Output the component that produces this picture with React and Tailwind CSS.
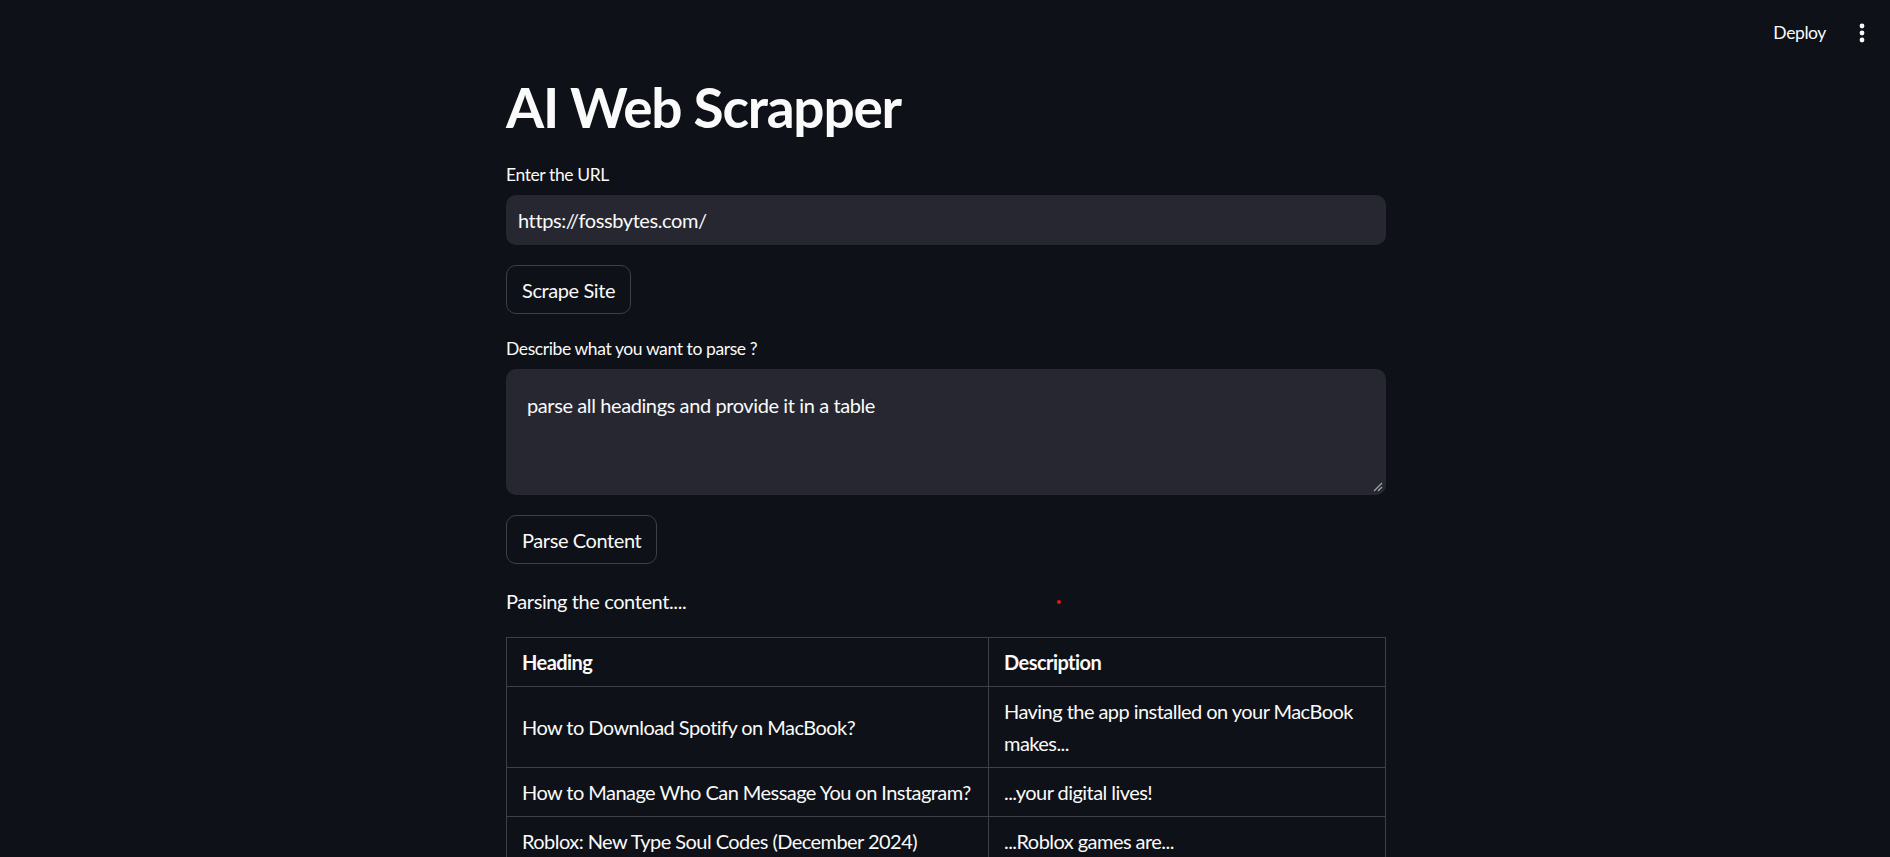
import React from "react";

const rows = [
  ["How to Download Spotify on MacBook?", "Having the app installed on your MacBook makes..."],
  ["How to Manage Who Can Message You on Instagram?", "...your digital lives!"],
  ["Roblox: New Type Soul Codes (December 2024)", "...Roblox games are..."],
];

export default function App() {
  return (
    <div
      className="relative min-h-[857px] w-full overflow-hidden bg-[#0e1117] text-[#fafafa] tracking-[-0.4px]"
      style={{ fontFamily: "Lato, 'Noto Sans', sans-serif" }}
    >
      {/* header */}
      <div className="absolute right-0 top-0 flex h-[66px] items-center pr-[25px]">
        <span className="mr-[33px] text-[17.5px] leading-none">Deploy</span>
        <svg width="6" height="20" viewBox="0 0 6 20" className="fill-[#fafafa]">
          <circle cx="3" cy="3" r="2.4" />
          <circle cx="3" cy="10" r="2.4" />
          <circle cx="3" cy="17" r="2.4" />
        </svg>
      </div>

      <div className="mx-auto flex w-[880px] flex-col gap-5 pt-[74px] translate-x-[1px]">
        <h1 className="text-[55px] font-bold leading-[66px] tracking-[-1.2px]">AI Web Scrapper</h1>

        <div className="flex flex-col">
          <label className="flex h-[30px] items-center text-[17.5px]">Enter the URL</label>
          <div className="mt-[5px] flex h-[50px] items-center rounded-[10px] bg-[#262730] pl-[12px] text-[20px]">
            https://fossbytes.com/
          </div>
        </div>

        <div>
          <button className="flex h-[49px] items-center rounded-[10px] border border-[#3d4046] bg-[#0e1117] px-[15px] text-[20px] text-[#fafafa]">
            Scrape Site
          </button>
        </div>

        <div className="flex flex-col">
          <label className="flex h-[30px] items-center text-[17.5px]">Describe what you want to parse ?</label>
          <div className="relative mt-[5px] h-[126px] rounded-[10px] bg-[#262730] pl-[21px] pt-[20px] text-[20px] leading-[32px]">
            parse all headings and provide it in a table
            <svg
              width="10"
              height="10"
              viewBox="0 0 10 10"
              className="absolute bottom-[3px] right-[3px] stroke-[#a0a0a8]"
              strokeWidth="1.3"
            >
              <line x1="9" y1="1" x2="1" y2="9" />
              <line x1="9" y1="5" x2="5" y2="9" />
            </svg>
          </div>
        </div>

        <div>
          <button className="flex h-[49px] items-center rounded-[10px] border border-[#3d4046] bg-[#0e1117] px-[15px] text-[20px] text-[#fafafa]">
            Parse Content
          </button>
        </div>

        <p className="mt-[1px] text-[20px] leading-[32px]">Parsing the content....</p>

        <table className="w-full table-fixed border-collapse text-[20px] leading-[32px] tracking-[-0.55px]">
          <colgroup>
            <col className="w-[482px]" />
            <col />
          </colgroup>
          <thead>
            <tr>
              <th className="border border-[#3d4046] px-[15px] py-[8px] text-left font-bold">Heading</th>
              <th className="border border-[#3d4046] px-[15px] py-[8px] text-left font-bold">Description</th>
            </tr>
          </thead>
          <tbody>
            {rows.map((r, i) => (
              <tr key={i}>
                <td className="whitespace-nowrap border border-[#3d4046] px-[15px] py-[8px] align-middle">{r[0]}</td>
                <td className="border border-[#3d4046] px-[15px] py-[8px] align-middle">{r[1]}</td>
              </tr>
            ))}
          </tbody>
        </table>
      </div>

      <div className="absolute left-[1057px] top-[600px] h-[4px] w-[4px] rounded-full bg-[#e8141a]" />
    </div>
  );
}
